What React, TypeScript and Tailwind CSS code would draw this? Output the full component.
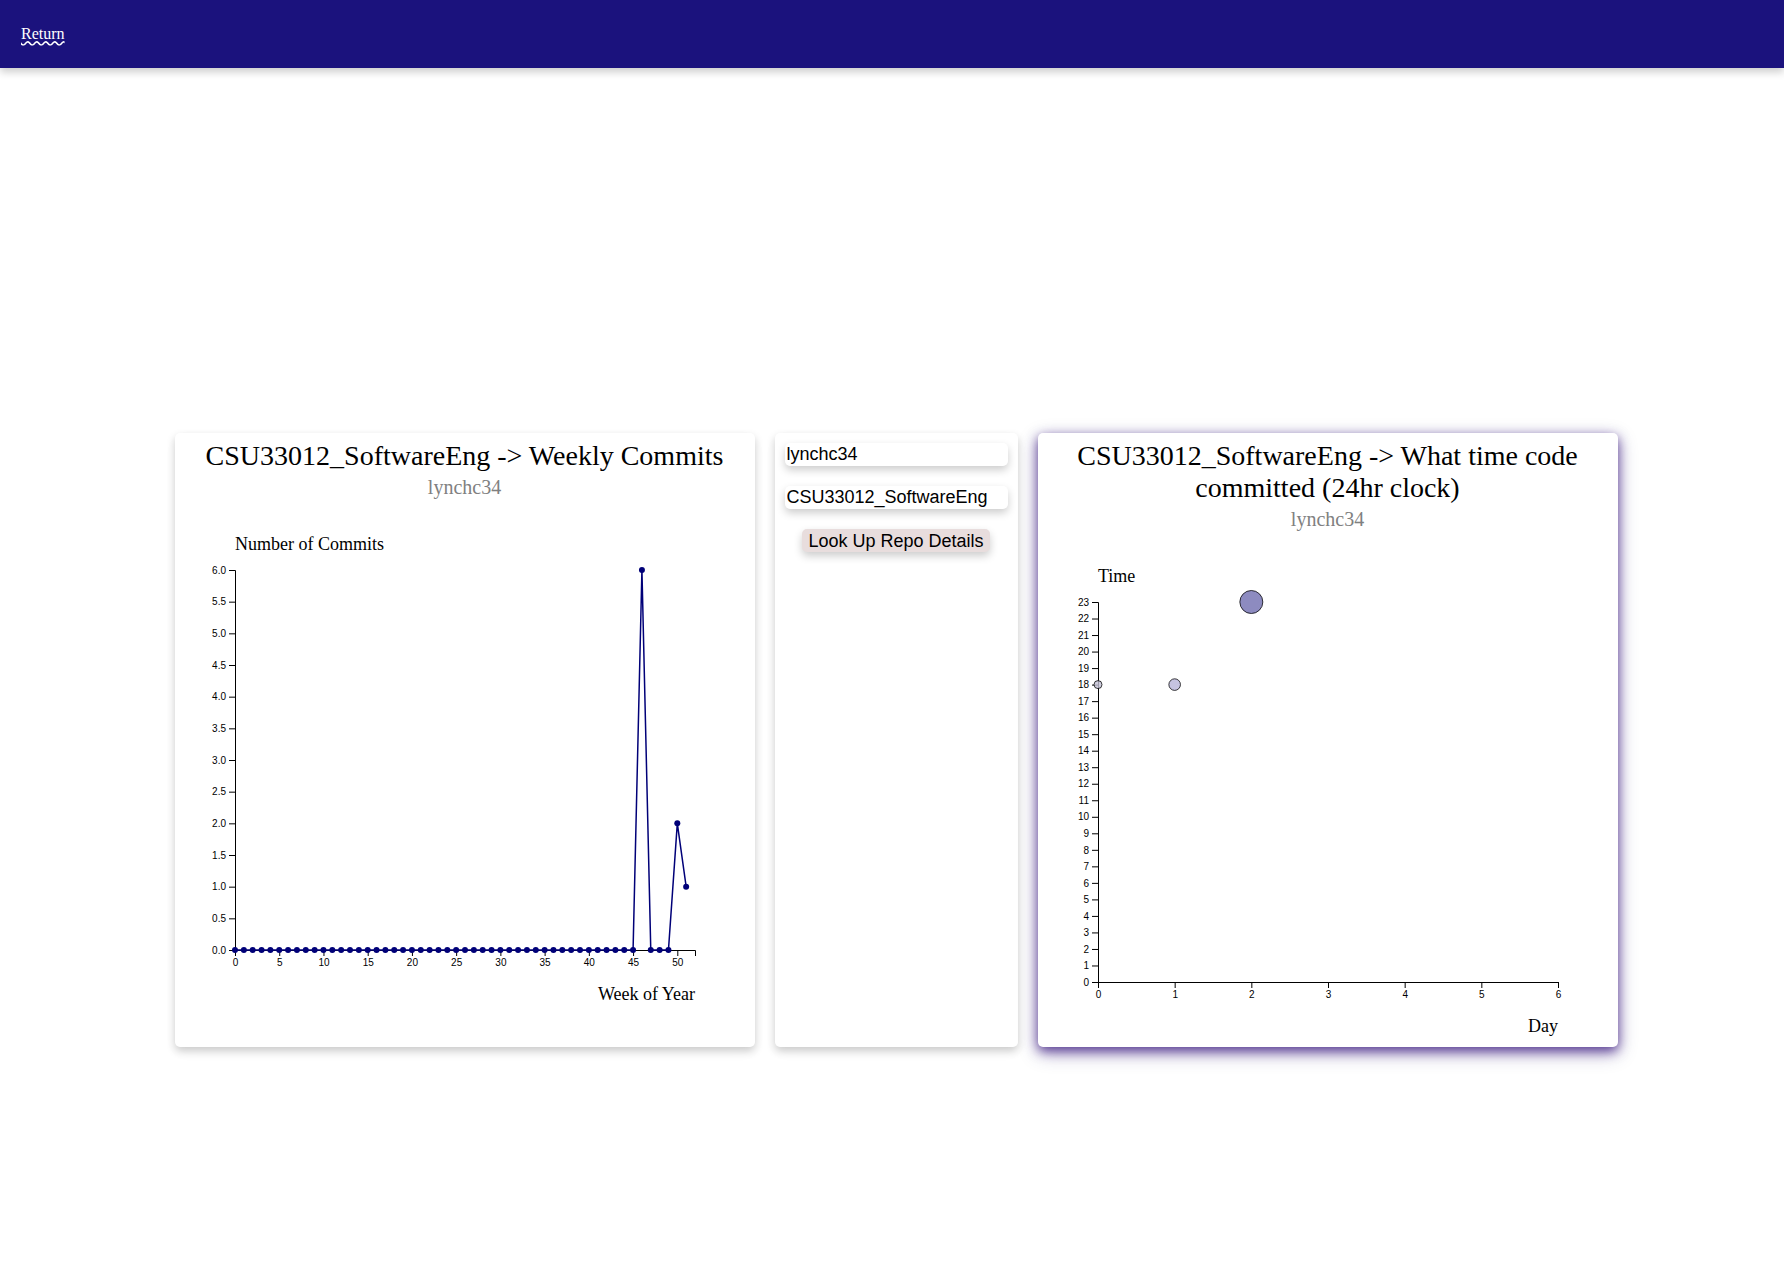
import { useState } from "react";
import type { FormEvent, ReactNode } from "react";

const PLOT_WIDTH = 460;
const PLOT_HEIGHT = 380;

type Tick = { value: number; label: string };

const range = (count: number) => Array.from({ length: count }, (_, i) => i);

function Axes(props: {
  xTicks: Tick[];
  yTicks: Tick[];
  xMax: number;
  yMax: number;
  xLabel: string;
  yLabel: string;
}) {
  const { xTicks, yTicks, xMax, yMax, xLabel, yLabel } = props;
  return (
    <>
      <g className="font-['Liberation_Sans',sans-serif] text-[10px]">
        <path d="M0.5,386V380.5H460.5V386" fill="none" stroke="#000" />
        {xTicks.map((t) => (
          <g key={t.value} transform={`translate(${(t.value / xMax) * PLOT_WIDTH + 0.5},${PLOT_HEIGHT})`}>
            <line y2="6" stroke="#000" />
            <text y="9" dy="0.71em" textAnchor="middle">
              {t.label}
            </text>
          </g>
        ))}
        <path d="M-6,380.5H0.5V0.5H-6" fill="none" stroke="#000" />
        {yTicks.map((t) => (
          <g key={t.value} transform={`translate(0,${PLOT_HEIGHT - (t.value / yMax) * PLOT_HEIGHT + 0.5})`}>
            <line x2="-6" stroke="#000" />
            <text x="-9" dy="0.32em" textAnchor="end">
              {t.label}
            </text>
          </g>
        ))}
      </g>
      <g className="text-lg">
        <text x="0" y="-20">
          {yLabel}
        </text>
        <text x={PLOT_WIDTH} y={PLOT_HEIGHT + 50} textAnchor="end">
          {xLabel}
        </text>
      </g>
    </>
  );
}

const weeklyCommits = range(52).map((week) => ({
  week,
  commits: week === 46 ? 6 : week === 50 ? 2 : week === 51 ? 1 : 0,
}));

function WeeklyChart() {
  const points = weeklyCommits.map((d) => ({
    x: (d.week / 52) * PLOT_WIDTH,
    y: PLOT_HEIGHT - (d.commits / 6) * PLOT_HEIGHT,
  }));
  return (
    <svg width="580" height="500" role="img" aria-label="Commits per week of the year">
      <g transform="translate(60,60)">
        <Axes
          xTicks={range(11).map((i) => ({ value: i * 5, label: String(i * 5) }))}
          yTicks={range(13).map((i) => ({ value: i / 2, label: (i / 2).toFixed(1) }))}
          xMax={52}
          yMax={6}
          xLabel="Week of Year"
          yLabel="Number of Commits"
        />
        <path d={"M" + points.map((p) => `${p.x},${p.y}`).join("L")} fill="none" stroke="#000078" strokeWidth="1.5" />
        {points.map((p) => (
          <circle key={p.x} cx={p.x} cy={p.y} r="3" fill="#000078" />
        ))}
      </g>
    </svg>
  );
}

const commitTimes = [
  { day: 0, hour: 18, radius: 4, fill: "#c4c2d6" },
  { day: 1, hour: 18, radius: 5.8, fill: "#b6b4d8" },
  { day: 2, hour: 23, radius: 11.5, fill: "#716eb0" },
];

function TimeChart() {
  return (
    <svg width="580" height="500" role="img" aria-label="Commit times by day">
      <g transform="translate(60,60)">
        <Axes
          xTicks={range(7).map((i) => ({ value: i, label: String(i) }))}
          yTicks={range(24).map((i) => ({ value: i, label: String(i) }))}
          xMax={6}
          yMax={23}
          xLabel="Day"
          yLabel="Time"
        />
        {commitTimes.map((d) => (
          <circle
            key={d.day}
            cx={(d.day / 6) * PLOT_WIDTH}
            cy={PLOT_HEIGHT - (d.hour / 23) * PLOT_HEIGHT}
            r={d.radius}
            fill={d.fill}
            fillOpacity="0.8"
            stroke="#000"
            strokeOpacity="0.75"
          />
        ))}
      </g>
    </svg>
  );
}

function ChartCard(props: { title: string; user: string; highlighted?: boolean; children: ReactNode }) {
  return (
    <section
      className={
        props.highlighted
          ? "w-[580px] shrink-0 rounded-[5px] bg-white pb-[5px] pt-[7px] shadow-[0_4px_12px_0_rgba(37,2,114,0.7),0_6px_20px_0_rgba(37,2,114,0.3)]"
          : "w-[580px] shrink-0 rounded-[5px] bg-white pb-[5px] pt-[7px] shadow-[0_4px_8px_0_rgba(0,0,0,0.2),0_6px_20px_0_rgba(0,0,0,0.02)]"
      }
    >
      <h2 className="px-5 text-center text-[28px] leading-8">{props.title}</h2>
      <p className="mb-[11px] pt-1 text-center text-xl leading-[23px] text-[gray]">{props.user}</p>
      {props.children}
    </section>
  );
}

export default function App() {
  const [user, setUser] = useState("lynchc34");
  const [repo, setRepo] = useState("CSU33012_SoftwareEng");
  const [shown, setShown] = useState({ user, repo });

  const lookUp = (e: FormEvent) => {
    e.preventDefault();
    setShown({ user, repo });
  };

  const field =
    "h-[23px] w-full rounded-[5px] bg-white px-0.5 text-lg leading-5 shadow-[0_4px_8px_0_rgba(0,0,0,0.2)] outline-none";

  return (
    <div className="flex min-h-screen flex-col bg-white font-['Liberation_Serif',serif] text-black">
      <nav className="flex h-[68px] items-center bg-[#1b127d] px-[21px] shadow-[0_4px_8px_0_rgba(0,0,0,0.2)]">
        <a href="#" className="text-base leading-5 text-white underline decoration-wavy">
          Return
        </a>
      </nav>
      <main className="flex flex-1 items-center justify-center pl-2 pt-[136px]">
        <div className="flex items-stretch gap-5">
          <ChartCard title={`${shown.repo} -> Weekly Commits`} user={shown.user}>
            <WeeklyChart />
          </ChartCard>
          <form
            onSubmit={lookUp}
            className="flex w-[243px] shrink-0 flex-col items-center gap-5 rounded-[5px] bg-white p-2.5 font-['Liberation_Sans',sans-serif] shadow-[0_4px_8px_0_rgba(0,0,0,0.2),0_6px_20px_0_rgba(0,0,0,0.02)]"
          >
            <input aria-label="User name" className={field} value={user} onChange={(e) => setUser(e.target.value)} />
            <input aria-label="Repository" className={field} value={repo} onChange={(e) => setRepo(e.target.value)} />
            <button
              type="submit"
              className="h-[23px] rounded-[5px] bg-[#e8dddd] px-1.5 text-lg leading-5 shadow-[0_4px_8px_0_rgba(0,0,0,0.2)]"
            >
              Look Up Repo Details
            </button>
          </form>
          <ChartCard title={`${shown.repo} -> What time code committed (24hr clock)`} user={shown.user} highlighted>
            <TimeChart />
          </ChartCard>
        </div>
      </main>
    </div>
  );
}
